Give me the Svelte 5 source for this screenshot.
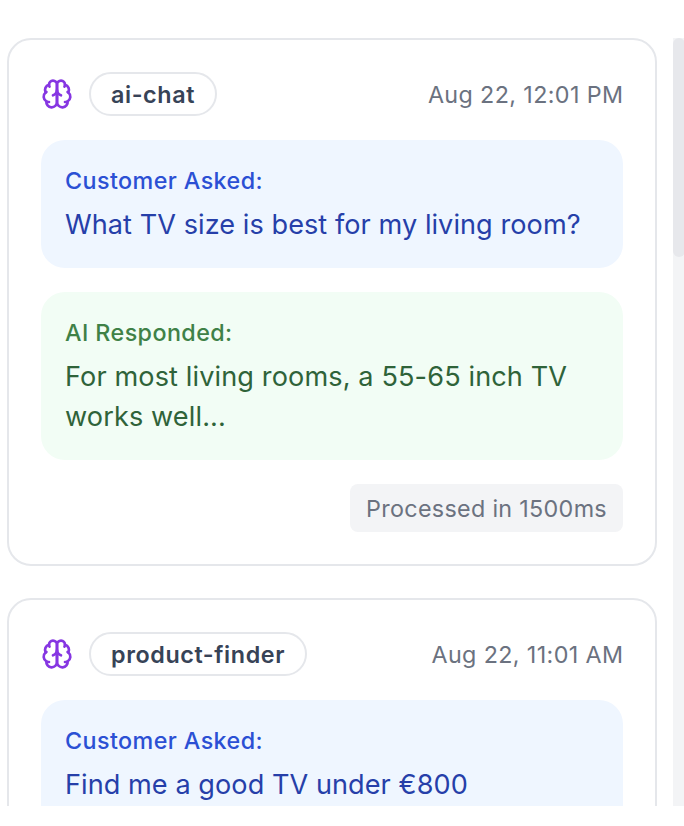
<script>
  const entries = [
    {
      source: 'ai-chat',
      time: 'Aug 22, 12:01 PM',
      question: 'What TV size is best for my living room?',
      answer: 'For most living rooms, a 55-65 inch TV works well...',
      duration: 1500
    },
    {
      source: 'product-finder',
      time: 'Aug 22, 11:01 AM',
      question: 'Find me a good TV under €800'
    }
  ];

  const brainPaths = [
    'M12 5a3 3 0 1 0-5.997.125 4 4 0 0 0-2.526 5.77 4 4 0 0 0 .556 6.588A4 4 0 1 0 12 18Z',
    'M12 5a3 3 0 1 1 5.997.125 4 4 0 0 1 2.526 5.77 4 4 0 0 1-.556 6.588A4 4 0 1 1 12 18Z',
    'M15 13a4.5 4.5 0 0 1-3-4 4.5 4.5 0 0 1-3 4',
    'M17.599 6.5a3 3 0 0 0 .399-1.375',
    'M6.003 5.125A3 3 0 0 0 6.401 6.5',
    'M3.477 10.896a4 4 0 0 1 .585-.396',
    'M19.938 10.5a4 4 0 0 1 .585.396',
    'M6 18a4 4 0 0 1-1.967-.516',
    'M19.967 17.484A4 4 0 0 1 18 18'
  ];
</script>

<main class="viewport">
  <div class="list">
    {#each entries as entry}
      <article class="card">
        <header>
          <div class="source">
            <svg class="brain" viewBox="0 0 24 24" aria-hidden="true">
              {#each brainPaths as d}
                <path {d} />
              {/each}
            </svg>
            <span class="pill">{entry.source}</span>
          </div>
          <time>{entry.time}</time>
        </header>
        <section class="message asked">
          <h3>Customer Asked:</h3>
          <p>{entry.question}</p>
        </section>
        {#if entry.answer}
          <section class="message answered">
            <h3>AI Responded:</h3>
            <p>{entry.answer}</p>
          </section>
        {/if}
        {#if entry.duration}
          <footer><span class="tag">Processed in {entry.duration}ms</span></footer>
        {/if}
      </article>
    {/each}
  </div>
  <div class="track"><div class="thumb"></div></div>
</main>

<style>
  :global(body) {
    background: #fff;
    overflow: hidden;
  }
  .viewport {
    display: flex;
    gap: 16px;
    height: 768px;
    margin-top: 38px;
    padding-left: 7px;
    overflow: hidden;
    font-family: Inter, 'Liberation Sans', sans-serif;
    font-size: 23.3px;
    line-height: 32px;
    letter-spacing: 0.38px;
  }
  .list {
    display: flex;
    flex-direction: column;
    gap: 32px;
    width: 650px;
    flex: none;
  }
  .card {
    box-sizing: border-box;
    display: flex;
    flex-direction: column;
    flex: none;
    gap: 24px;
    padding: 32px;
    border: 2px solid #e5e7eb;
    border-radius: 24px;
  }
  header,
  .source {
    display: flex;
    align-items: center;
  }
  header {
    justify-content: space-between;
  }
  .source {
    gap: 16px;
  }
  .brain {
    width: 32px;
    height: 32px;
    fill: none;
    stroke: #8636e2;
    stroke-width: 2;
    stroke-linecap: round;
    stroke-linejoin: round;
  }
  .pill {
    padding: 5px 20px 3px;
    border: 2px solid #e5e7eb;
    border-radius: 22px;
    color: #374357;
    font-weight: 600;
    letter-spacing: 0.6px;
  }
  time {
    padding-top: 2px;
    margin-right: -0.4px;
    color: #6b7280;
  }
  .message {
    display: flex;
    flex-direction: column;
    gap: 8px;
    padding: 25px 24px 23px;
    border-radius: 24px;
  }
  h3,
  p {
    margin: 0;
  }
  h3 {
    font-size: 23.3px;
    font-weight: 500;
    line-height: 32px;
    letter-spacing: 0.42px;
  }
  p {
    font-size: 27.1px;
    line-height: 40px;
    letter-spacing: 0.06px;
  }
  .asked {
    background: #eff6ff;
    color: #263fa9;
  }
  .asked h3 {
    color: #2b50d4;
  }
  .answered {
    background: #f2fdf5;
    color: #2f6339;
  }
  .answered h3 {
    color: #3f8147;
  }
  .answered p {
    letter-spacing: 0.12px;
  }
  footer {
    display: flex;
    justify-content: flex-end;
  }
  .tag {
    padding: 9px 16px 7px;
    border-radius: 8px;
    background: #f3f4f6;
    color: #6b7280;
    letter-spacing: 0.32px;
  }
  .track {
    flex: 1;
    background: #f3f4f6;
  }
  .thumb {
    width: 12px;
    height: 219px;
    border-radius: 6px;
    background: #e7e8ec;
  }
</style>
